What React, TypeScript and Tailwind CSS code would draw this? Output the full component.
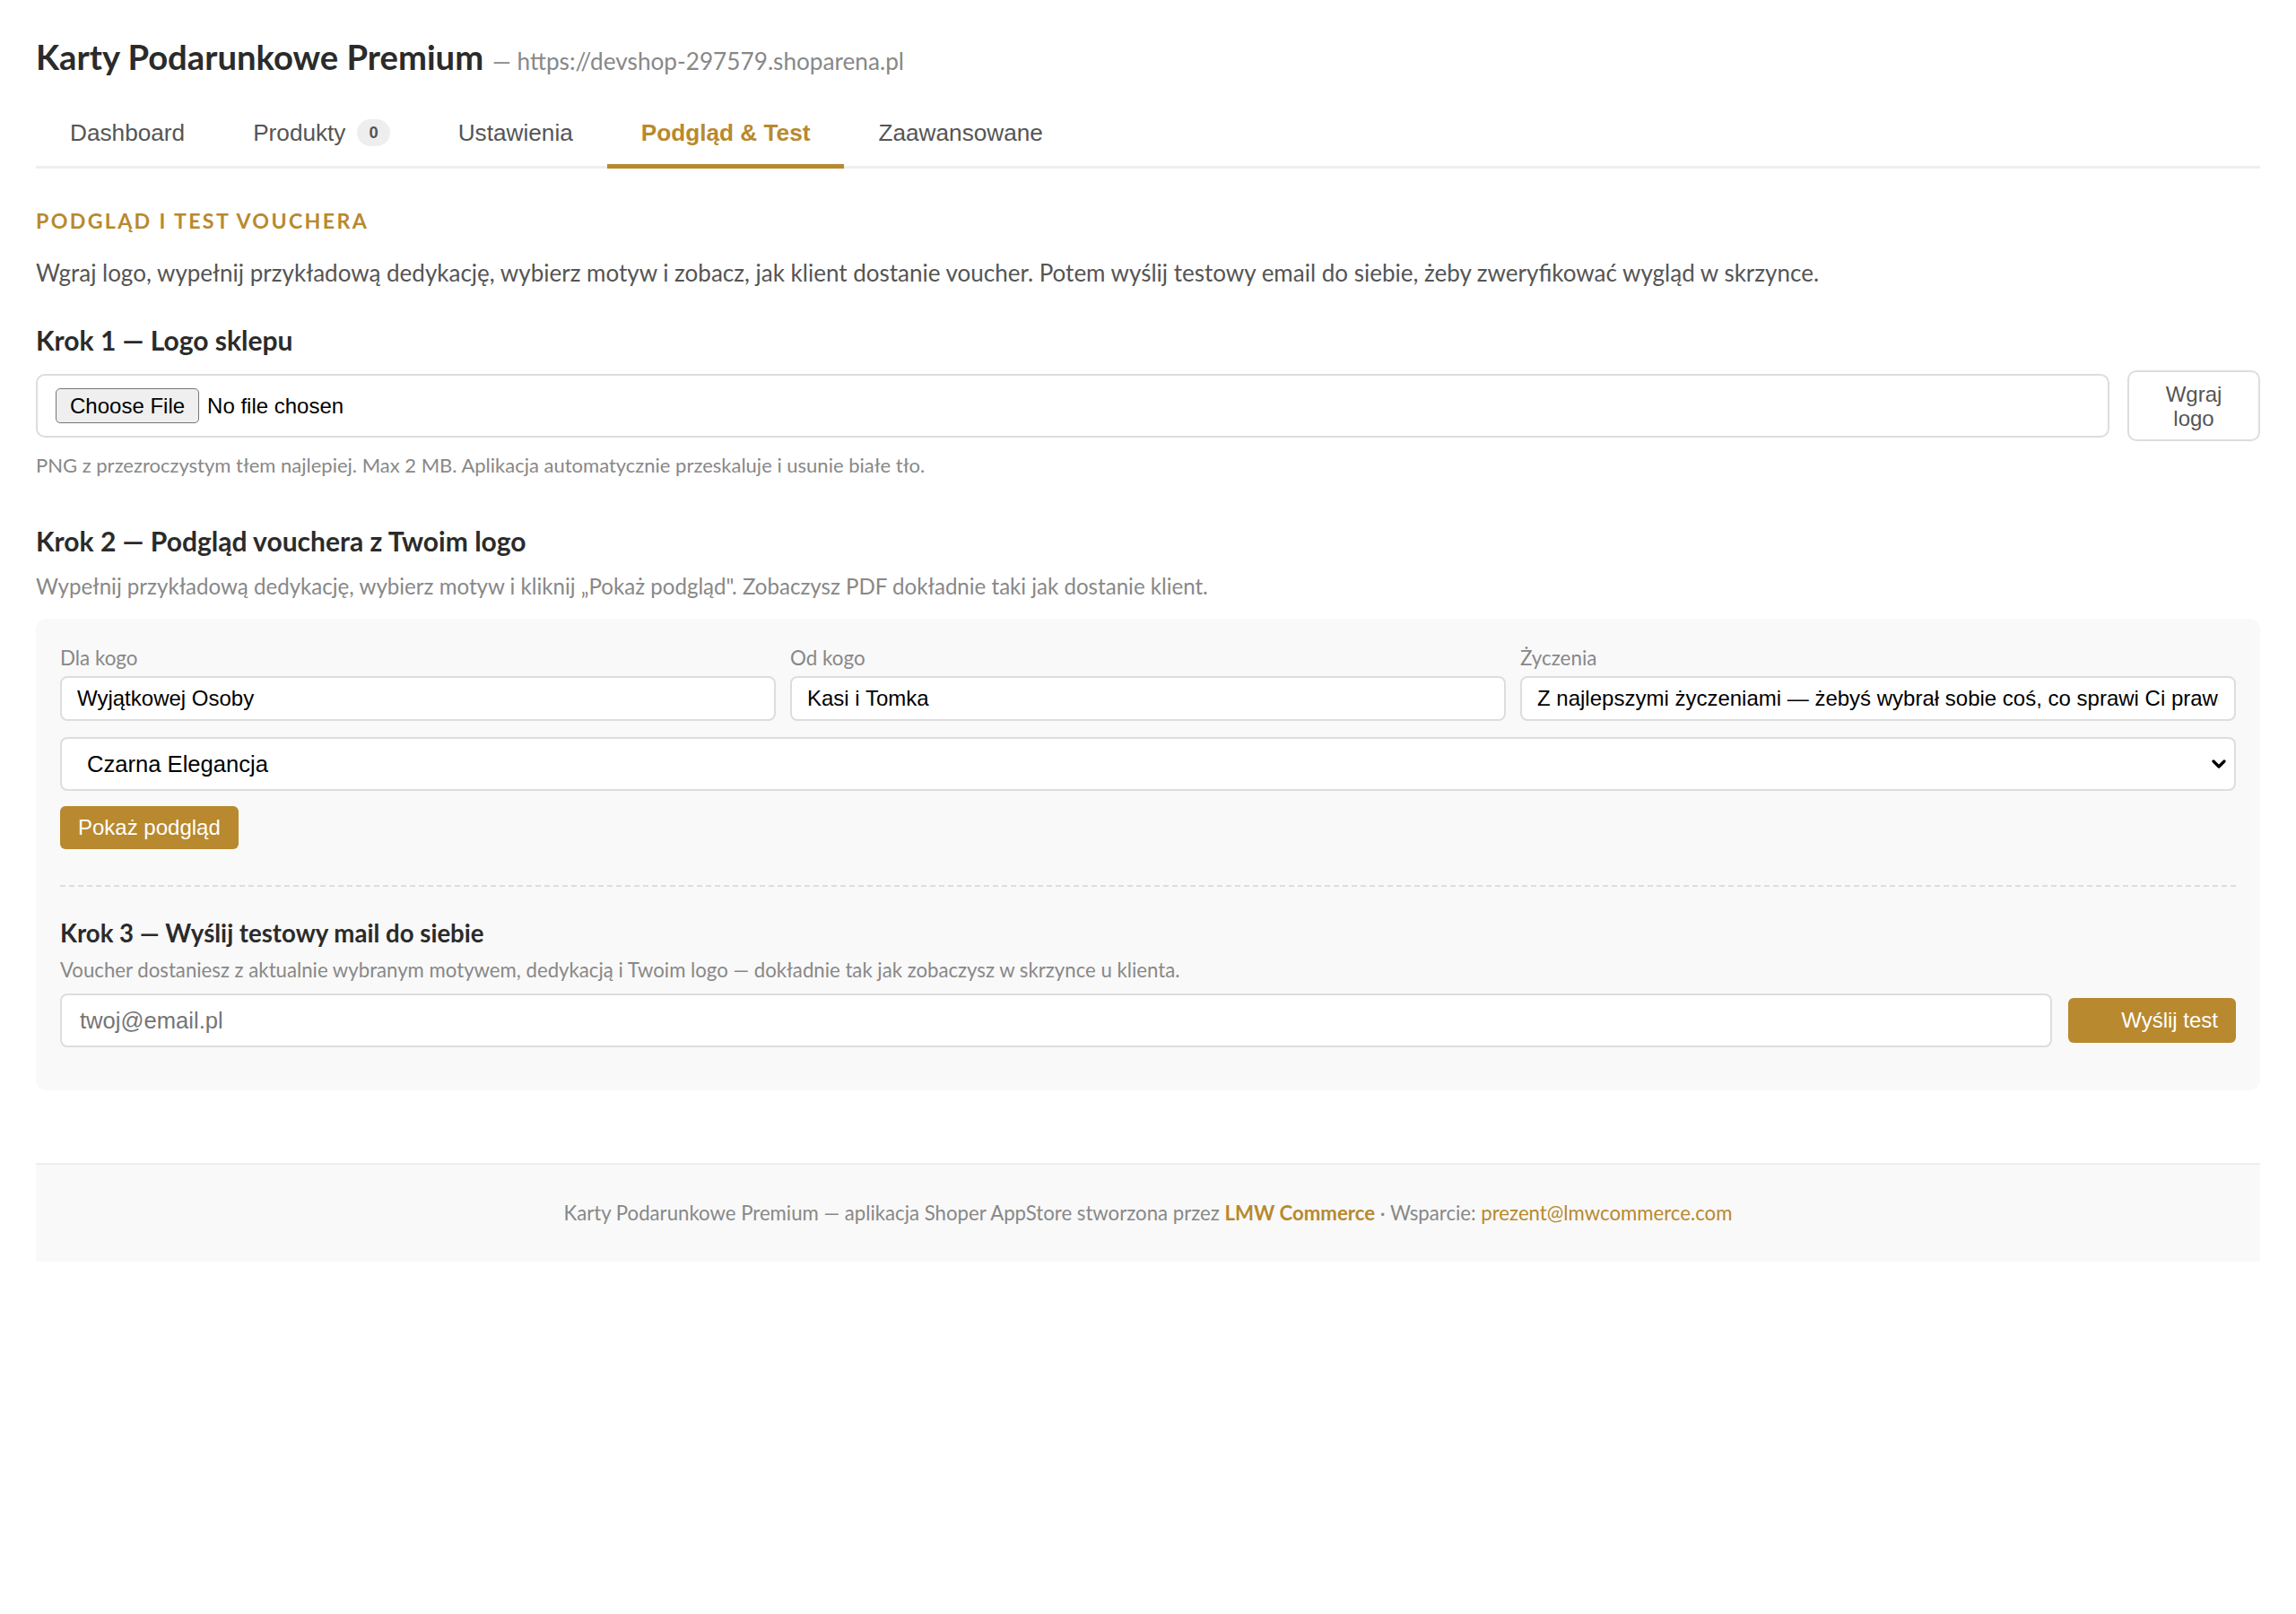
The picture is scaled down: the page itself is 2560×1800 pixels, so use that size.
import React, { useState } from 'react';

const tabs = [
  { id: 'dashboard', label: 'Dashboard' },
  { id: 'products', label: 'Produkty', badge: '0' },
  { id: 'settings', label: 'Ustawienia' },
  { id: 'preview', label: 'Podgląd & Test' },
  { id: 'advanced', label: 'Zaawansowane' },
];

const themes = ['Czarna Elegancja', 'Złoty Klasyk', 'Biały Minimalizm'];

const ui = "font-['Liberation_Sans',Arial,sans-serif]";

const Field = ({ label, value, onChange }: { label: string; value: string; onChange: (v: string) => void }) => (
  <label className="flex min-w-0 flex-col">
    <span className="mb-[6px] text-[22.4px] leading-[28px] text-[#888]">{label}</span>
    <input
      value={value}
      onChange={(e) => onChange(e.target.value)}
      className={`${ui} h-[50px] w-full rounded-[8px] border-2 border-[#ddd] bg-white px-[17px] text-[24px] text-black outline-none`}
    />
  </label>
);

export default function App() {
  const [active, setActive] = useState('preview');
  const [to, setTo] = useState('Wyjątkowej Osoby');
  const [from, setFrom] = useState('Kasi i Tomka');
  const [wishes, setWishes] = useState(
    'Z najlepszymi życzeniami — żebyś wybrał sobie coś, co sprawi Ci prawdziwą radość!'
  );
  const [theme, setTheme] = useState(themes[0]);
  const [email, setEmail] = useState('');

  return (
    <div className="min-h-screen bg-white px-[40px] pt-[40px] font-[Lato,sans-serif] text-[#333]">
      {/* header */}
      <div className="flex h-[46px] items-baseline overflow-visible">
        <h1 className="text-[38.2px] font-bold leading-[46px] text-[#2b2b2b]">Karty Podarunkowe Premium</h1>
        <span className="ml-[10px] text-[26.2px] leading-[30px] text-[#888]">— https://devshop-297579.shoparena.pl</span>
      </div>

      {/* tabs */}
      <div className="mt-[28px] flex border-b-[3px] border-[#eee]">
        {tabs.map((t) => {
          const on = t.id === active;
          return (
            <button
              key={t.id}
              onClick={() => setActive(t.id)}
              className={`${ui} -mb-[3px] flex items-center border-b-[5px] px-[38px] pt-[19px] pb-[20px] text-[26.2px] leading-[30px] ${
                on ? 'border-[#b8892e] font-bold text-[#b8892e]' : 'border-transparent text-[#555]'
              }`}
            >
              {t.label}
              {t.badge && (
                <span className="ml-[13px] flex h-[30px] items-center rounded-full bg-[#eee] px-[13px] text-[18.4px] font-bold text-[#555]">
                  {t.badge}
                </span>
              )}
            </button>
          );
        })}
      </div>

      <h2 className="mt-[43px] text-[23.2px] font-bold uppercase leading-[30px] tracking-[0.1em] text-[#b8892e]">
        Podgląd i test vouchera
      </h2>
      <p className="mt-[25px] text-[26px] leading-[36px] text-[#555]">
        Wgraj logo, wypełnij przykładową dedykację, wybierz motyw i zobacz, jak klient dostanie voucher. Potem wyślij
        testowy email do siebie, żeby zweryfikować wygląd w skrzynce.
      </p>

      {/* step 1 */}
      <h3 className="mt-[39px] text-[30px] font-bold leading-[36px] text-[#2b2b2b]">Krok 1 — Logo sklepu</h3>
      <div className="mt-[16px] flex items-center gap-[20px]">
        <input
          type="file"
          accept="image/png,image/jpeg"
          className={`${ui} h-[71px] min-w-0 flex-1 rounded-[10px] border-2 border-[#ddd] bg-white px-[20px] py-[14px] text-[24px] text-black file:mr-[9px] file:h-[39px] file:rounded-[5px] file:border-[1.6px] file:border-solid file:border-[#767676] file:bg-[#efefef] file:px-[15px] file:text-black`}
        />
        <button
          className={`${ui} h-[79px] w-[148px] shrink-0 rounded-[10px] border-2 border-[#ddd] bg-white px-[19px] text-[24px] leading-[27px] text-[#555]`}
        >
          Wgraj logo
        </button>
      </div>
      <p className="mt-[13px] text-[22px] leading-[28px] text-[#888]">
        PNG z przezroczystym tłem najlepiej. Max 2 MB. Aplikacja automatycznie przeskaluje i usunie białe tło.
      </p>

      {/* step 2 */}
      <h3 className="mt-[52px] text-[30px] font-bold leading-[36px] text-[#2b2b2b]">
        Krok 2 — Podgląd vouchera z Twoim logo
      </h3>
      <p className="mt-[17px] text-[24.1px] leading-[32px] text-[#888]">
        Wypełnij przykładową dedykację, wybierz motyw i kliknij „Pokaż podgląd". Zobaczysz PDF dokładnie taki jak
        dostanie klient.
      </p>

      <div className="mt-[20px] rounded-[12px] bg-[#f9f9f9] px-[27px] pt-[30px] pb-[48px]">
        <div className="grid grid-cols-3 gap-[16px]">
          <Field label="Dla kogo" value={to} onChange={setTo} />
          <Field label="Od kogo" value={from} onChange={setFrom} />
          <Field label="Życzenia" value={wishes} onChange={setWishes} />
        </div>

        <div className="relative mt-[18px]">
          <select
            value={theme}
            onChange={(e) => setTheme(e.target.value)}
            className={`${ui} h-[60px] w-full appearance-none rounded-[8px] border-2 border-[#ddd] bg-white pl-[28px] text-[25.6px] text-black outline-none`}
          >
            {themes.map((t) => (
              <option key={t}>{t}</option>
            ))}
          </select>
          <svg
            className="pointer-events-none absolute right-[11px] top-1/2 -translate-y-1/2"
            width="16"
            height="11"
            viewBox="0 0 16 11"
            fill="none"
          >
            <path d="M2 2.5l6 6 6-6" stroke="#000" strokeWidth="3.2" strokeLinecap="round" strokeLinejoin="round" />
          </svg>
        </div>

        <button
          className={`${ui} mt-[17px] h-[48px] rounded-[6px] bg-[#b8892e] px-[20px] text-[24px] text-white`}
        >
          Pokaż podgląd
        </button>

        <div className="mt-[40px] border-t-2 border-dashed border-[#ddd] pt-[36px]">
          <h4 className="text-[27.6px] font-bold leading-[32px] text-[#2b2b2b]">Krok 3 — Wyślij testowy mail do siebie</h4>
          <p className="mt-[11px] text-[22.2px] leading-[28px] text-[#888]">
            Voucher dostaniesz z aktualnie wybranym motywem, dedykacją i Twoim logo — dokładnie tak jak zobaczysz w
            skrzynce u klienta.
          </p>
          <div className="mt-[12px] flex items-center gap-[18px]">
            <input
              type="email"
              value={email}
              onChange={(e) => setEmail(e.target.value)}
              placeholder="twoj@email.pl"
              className={`${ui} h-[60px] min-w-0 flex-1 rounded-[8px] border-2 border-[#ddd] bg-white px-[20px] text-[25.6px] text-black outline-none placeholder:text-[#757575]`}
            />
            <button
              className={`${ui} flex h-[50px] w-[187px] shrink-0 items-center justify-end rounded-[6px] bg-[#b8892e] pr-[20px] text-[24px] text-white`}
            >
              <span className="invisible mr-[16px] h-[20px] w-[20px] rounded-full border-2 border-white" />
              Wyślij test
            </button>
          </div>
        </div>
      </div>

      {/* footer */}
      <footer className="mt-[81px] border-t-2 border-[#eee] bg-[#f9f9f9] py-[40px] text-center text-[22.2px] leading-[28px] text-[#888]">
        Karty Podarunkowe Premium — aplikacja Shoper AppStore stworzona przez{' '}
        <a className="font-bold text-[#b8892e]">LMW Commerce</a> · Wsparcie:{' '}
        <a className="text-[#b8892e]">prezent@lmwcommerce.com</a>
      </footer>
    </div>
  );
}
